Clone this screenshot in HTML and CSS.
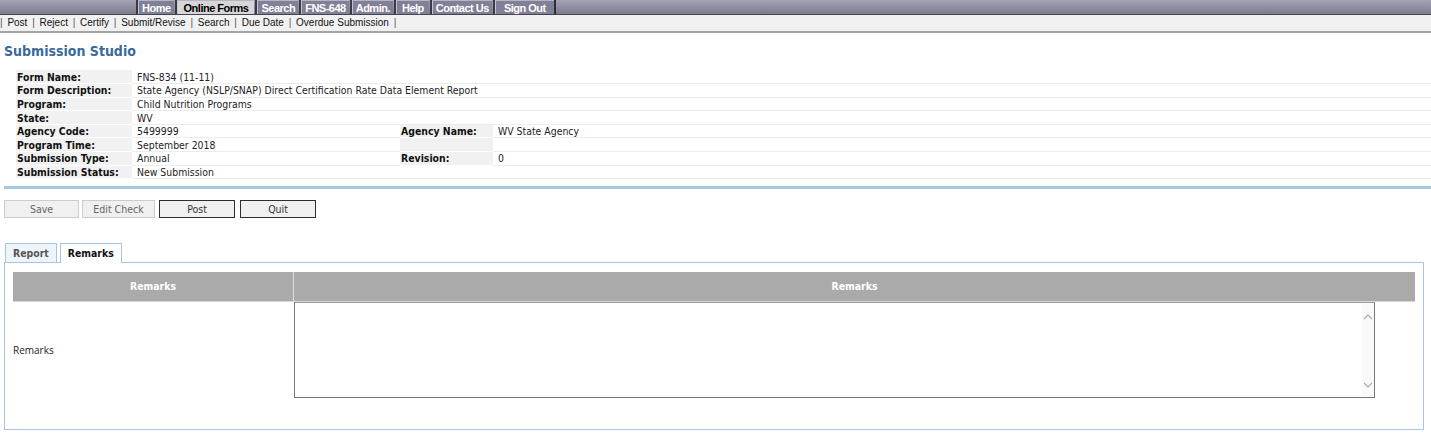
FILE: index.html
```html
<!DOCTYPE html>
<html>
<head>
<meta charset="utf-8">
<title>Submission Studio</title>
<link rel="stylesheet" href="styles.css">
</head>
<body>
<div class="topbar">
  <div class="bar-lead"></div>
  <nav class="menu">
    <a class="menu-item">Home</a>
    <a class="menu-item active">Online Forms</a>
    <a class="menu-item">Search</a>
    <a class="menu-item">FNS-648</a>
    <a class="menu-item">Admin.</a>
    <a class="menu-item wide">Help</a>
    <a class="menu-item">Contact Us</a>
    <a class="menu-item widest">Sign Out</a>
  </nav>
  <div class="bar-rest"></div>
</div>
<div class="subnav">
  <span class="sep first">|</span> Post <span class="sep">|</span> Reject <span class="sep">|</span> Certify <span class="sep">|</span> Submit/Revise <span class="sep">|</span> Search <span class="sep">|</span> Due Date <span class="sep">|</span> Overdue Submission <span class="sep">|</span>
</div>

<h1 class="title">Submission Studio</h1>

<table class="info">
  <colgroup>
    <col class="c-label"><col class="c-value"><col class="c-label2"><col>
  </colgroup>
  <tr><th>Form Name:</th><td colspan="3">FNS-834 (11-11)</td></tr>
  <tr><th>Form Description:</th><td colspan="3">State Agency (NSLP/SNAP) Direct Certification Rate Data Element Report</td></tr>
  <tr><th>Program:</th><td colspan="3">Child Nutrition Programs</td></tr>
  <tr><th>State:</th><td colspan="3">WV</td></tr>
  <tr><th>Agency Code:</th><td>5499999</td><th>Agency Name:</th><td>WV State Agency</td></tr>
  <tr><th>Program Time:</th><td>September 2018</td><th></th><td></td></tr>
  <tr><th>Submission Type:</th><td>Annual</td><th>Revision:</th><td>0</td></tr>
  <tr><th>Submission Status:</th><td colspan="3">New Submission</td></tr>
</table>

<div class="divider"></div>

<div class="actions">
  <button class="btn disabled b-save">Save</button>
  <button class="btn disabled b-edit">Edit Check</button>
  <button class="btn b-post">Post</button>
  <button class="btn b-quit">Quit</button>
</div>

<div class="tabs">
  <div class="tab">Report</div>
  <div class="tab selected">Remarks</div>
</div>
<div class="panel">
  <div class="grid">
    <div class="hcell first">Remarks</div>
    <div class="hcell">Remarks</div>
    <div class="bcell label">Remarks</div>
    <div class="bcell">
      <div class="textarea">
        <div class="ta-content"></div>
        <div class="ta-scroll">
          <svg width="12" height="12" viewBox="0 0 12 12"><path d="M2 8 L6 4 L10 8" fill="none" stroke="#a8a8a8" stroke-width="1.2"/></svg>
          <svg width="12" height="12" viewBox="0 0 12 12"><path d="M2 4 L6 8 L10 4" fill="none" stroke="#a8a8a8" stroke-width="1.2"/></svg>
        </div>
      </div>
    </div>
  </div>
</div>
</body>
</html>
```

FILE: styles.css
```css
* { box-sizing: border-box; }
body {
  margin: 0;
  background: #fff;
  font-family: "DejaVu Sans Condensed", "DejaVu Sans", sans-serif;
  font-size: 10px;
  color: #222;
}
.topbar {
  display: flex;
  height: 15px;
  background: linear-gradient(#a3a3b3, #7c7c8e);
  border-bottom: 1px solid #44444f;
}
.bar-lead { width: 137px; }
.bar-rest { flex: 1; border-left: 2px solid #2d2d36; }
.menu { display: flex; }
.menu-item {
  display: block;
  height: 14px;
  line-height: 14px;
  padding: 0 3px;
  margin-left: 3px;
  background: #808096;
  border-left: 1px solid #c4c4d0;
  border-top: 1px solid #b4b4c2;
  box-shadow: -2px 0 0 #3a3a46;
  color: #fff;
  font-family: "Liberation Sans Narrow", "Liberation Sans", Arial, sans-serif;
  font-weight: bold;
  font-size: 11px;
  letter-spacing: -0.5px;
  white-space: nowrap;
}
.menu-item:first-child { margin-left: 1px; }
.menu-item.active {
  background: #d6d6d8;
  color: #000;
  padding: 0 6px;
}
.menu-item.wide { padding: 0 5px; }
.menu-item.widest { padding: 0 8px; }
.subnav {
  height: 18px;
  line-height: 16px;
  background: #f1f1f1;
  border-bottom: 2px solid #a4a4a4;
  font-family: "Liberation Sans", Arial, sans-serif;
  font-size: 10px;
  color: #111;
  white-space: nowrap;
}
.subnav .sep { color: #555; margin: 0 2px; }
.subnav .sep.first { margin: 0 2px 0 0; }
.title {
  margin: 10px 0 0 4px;
  font-size: 14px;
  font-weight: bold;
  color: #3a6a9a;
  line-height: 16px;
}
.info {
  margin: 11px 0 0 16px;
  width: calc(100% - 16px);
  border-collapse: collapse;
  table-layout: fixed;
}
.c-label { width: 116px; }
.c-value { width: 268px; }
.c-label2 { width: 93px; }
.info th, .info td {
  height: 13.6px;
  padding: 0 0 0 5px;
  line-height: 12px;
  text-align: left;
  white-space: nowrap;
  vertical-align: middle;
  font-size: 10.4px;
}
.info th {
  background: #f1f1f1;
  border-bottom: 1px solid #fff;
  font-weight: bold;
  color: #111;
  padding-left: 1px;
}
.info td {
  border-bottom: 1px solid #ececec;
  color: #222;
}
.divider {
  margin: 7px 0 0 4px;
  height: 3px;
  background: #a9c9e2;
}
.actions {
  display: flex;
  margin: 11px 0 0 4px;
}
.btn {
  height: 18px;
  width: 76px;
  padding: 0;
  background: #f0f0f0;
  border: 1px solid #2e2e2e;
  font-family: "DejaVu Sans Condensed", "DejaVu Sans", sans-serif;
  font-size: 10.5px;
  color: #333;
}
.btn.disabled {
  border-color: #cccccc;
  color: #666;
}
.b-save { width: 75px; }
.b-edit { width: 73px; margin-left: 3px; }
.b-post { margin-left: 4px; }
.b-quit { margin-left: 5px; }
.tabs {
  display: flex;
  gap: 3px;
  margin: 25px 0 0 5px;
  height: 19px;
  align-items: flex-end;
}
.tab {
  height: 19px;
  line-height: 19px;
  padding: 0 7px;
  border: 1px solid #a9c4e2;
  border-bottom: none;
  background: #eef4fb;
  font-weight: bold;
  font-size: 10.4px;
  color: #555;
}
.tab.selected {
  background: #fff;
  color: #111;
  height: 20px;
  margin-bottom: -1px;
  padding: 0 7px;
}
.panel {
  margin: 0 7px 0 4px;
  height: 168px;
  border: 1px solid #a9c4e2;
  padding: 9px 8px 0 8px;
}
.grid {
  display: grid;
  grid-template-columns: 281px 1fr;
}
.hcell {
  height: 30px;
  line-height: 29px;
  background: #aaaaaa;
  color: #fff;
  font-weight: bold;
  font-size: 10.4px;
  text-align: center;
  border-bottom: 1px solid #d8d8d8;
}
.hcell.first { border-right: 1px solid #dedede; }
.bcell { height: 96px; }
.bcell.label {
  display: flex;
  align-items: center;
  font-family: "Open Sans", sans-serif;
  font-size: 10px;
  color: #222;
}
.textarea {
  display: flex;
  width: 1081px;
  height: 96px;
  border: 1px solid #767676;
  border-top-color: #9a9a9a;
  background: #fff;
}
.ta-content { flex: 1; }
.ta-scroll {
  width: 12px;
  background: #fafafa;
  display: flex;
  flex-direction: column;
  justify-content: space-between;
  padding: 8px 0 6px;
}
```
